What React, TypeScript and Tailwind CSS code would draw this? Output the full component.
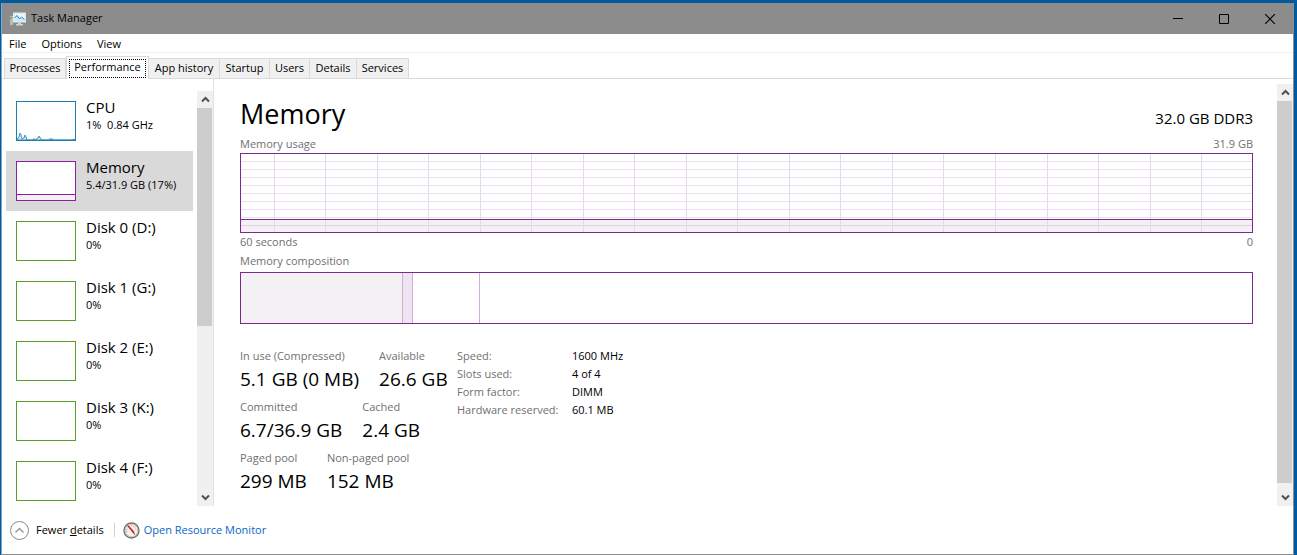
import React, { useState } from 'react';

const menus = ['File', 'Options', 'View'];

const tabs = [
  { name: 'Processes', width: 'w-[62px]' },
  { name: 'Performance', width: 'w-[83px]' },
  { name: 'App history', width: 'w-[71px]' },
  { name: 'Startup', width: 'w-[50px]' },
  { name: 'Users', width: 'w-[40px]' },
  { name: 'Details', width: 'w-[47px]' },
  { name: 'Services', width: 'w-[52px]' },
];

const devices = [
  { name: 'CPU', detail: '1%  0.84 GHz', border: 'border-[#1e7fa8]' },
  { name: 'Memory', detail: '5.4/31.9 GB (17%)', border: 'border-[#8b1fa0]' },
  { name: 'Disk 0 (D:)', detail: '0%', border: 'border-[#5a9e28]' },
  { name: 'Disk 1 (G:)', detail: '0%', border: 'border-[#5a9e28]' },
  { name: 'Disk 2 (E:)', detail: '0%', border: 'border-[#5a9e28]' },
  { name: 'Disk 3 (K:)', detail: '0%', border: 'border-[#5a9e28]' },
  { name: 'Disk 4 (F:)', detail: '0%', border: 'border-[#5a9e28]' },
];

const statRows = [
  [{ label: 'In use (Compressed)', value: '5.1 GB (0 MB)' }, { label: 'Available', value: '26.6 GB' }],
  [{ label: 'Committed', value: '6.7/36.9 GB' }, { label: 'Cached', value: '2.4 GB' }],
  [{ label: 'Paged pool', value: '299 MB' }, { label: 'Non-paged pool', value: '152 MB' }],
];

const hardware = [
  ['Speed:', '1600 MHz'],
  ['Slots used:', '4 of 4'],
  ['Form factor:', 'DIMM'],
  ['Hardware reserved:', '60.1 MB'],
];

const Chevron: React.FC<{ down?: boolean }> = ({ down }) => (
  <svg width="9" height="7" viewBox="0 0 9 7" className={down ? 'rotate-180' : ''}>
    <path d="M1 5.5 4.5 2 8 5.5" fill="none" stroke="#505050" strokeWidth="2" />
  </svg>
);

const ScrollBar: React.FC<{ thumb: string; label: string }> = ({ thumb, label }) => (
  <div className="flex w-4 shrink-0 flex-col bg-[#f0f0f0]">
    <button aria-label={`${label} up`} className="flex h-[17px] shrink-0 items-center justify-center">
      <Chevron />
    </button>
    <div className="min-h-0 flex-1">
      <div className={`mr-px bg-[#cdcdcd] ${thumb}`} />
    </div>
    <button aria-label={`${label} down`} className="flex h-[17px] shrink-0 items-center justify-center">
      <Chevron down />
    </button>
  </div>
);

const AppIcon = () => (
  <svg width="16" height="16" viewBox="0 0 16 16">
    <rect x="0" y="5" width="3" height="9" fill="#b9bcb4" />
    <rect x="0.5" y="6" width="1" height="2" fill="#4e9a3a" />
    <rect x="3" y="1.5" width="13" height="10" fill="#e4e8ea" />
    <rect x="4.5" y="3" width="10" height="7" fill="#eaf7fd" />
    <path d="M4.5 7 7 4.5 9.5 8 11.5 6 14.5 8.5V10h-10z" fill="#c9eafa" />
    <path d="M4.5 7 7 4.5 9.5 8 11.5 6 14.5 8.5" fill="none" stroke="#2187c4" strokeWidth="1" />
    <path d="M8 11.5h3V13h2v1.5H6V13h2z" fill="#d0d3d4" />
  </svg>
);

const GaugeIcon = () => (
  <svg width="17" height="17" viewBox="0 0 17 17">
    <circle cx="8.5" cy="8.5" r="7.5" fill="#f6f3f1" stroke="#77716d" strokeWidth="1.4" />
    <circle cx="8.5" cy="8.5" r="6.2" fill="none" stroke="#c9c2bd" strokeWidth="1" />
    <path d="M4 10A5 5 0 0 1 4.5 6M8 3.8A5 5 0 0 1 13 8.5" fill="none" stroke="#a09a96" strokeWidth="1" strokeDasharray="1 1" />
    <path d="M4 3.8 5.8 3.6 11.6 10 10.4 11.4z" fill="#d3221c" />
    <path d="M10 10.5 12 12.4" stroke="#8a1a16" strokeWidth="1" />
  </svg>
);

const Thumbnail: React.FC<{ name: string; border: string }> = ({ name, border }) => (
  <span className={`flex h-10 w-[60px] shrink-0 flex-col justify-end border bg-white ${border}`}>
    {name === 'CPU' && (
      <svg width="58" height="8" viewBox="0 0 58 8">
        <path
          d="M0 8 1 6 2 5 3 1 4 3 5 7 7 6 8 3 9 5 10 8H16L17 6.5 18 8 20 6.5 21 6 22 4 23 6 24 6.5 25 8H32L33 6.5 34 8 35 6.5 36 8H55L57 7 58 8z"
          fill="#d5e9f3"
          stroke="#3f93ba"
          strokeWidth="1"
        />
      </svg>
    )}
    {name === 'Memory' && <span className="h-[6px] border-t border-[#8b1fa0] bg-[#f5eff6]" />}
  </span>
);

const UsageChart = () => (
  <div className="h-20 border border-[#7a2a90] bg-white">
    <svg width="100%" height="78" className="block">
      <rect x="0" y="66" width="100%" height="12" fill="#f4f0f5" />
      {Array.from({ length: 9 }, (_, i) => (
        <rect key={i} x="0" y={7 + i * 8} width="100%" height="1" fill={i === 8 ? '#dcd4de' : '#e9e0ec'} />
      ))}
      {Array.from({ length: 19 }, (_, i) => (
        <line
          key={i}
          x1={`${3.3 + i * 5.095}%`}
          x2={`${3.3 + i * 5.095}%`}
          y1="0"
          y2="78"
          stroke="#e6d9ec"
          shapeRendering="crispEdges"
        />
      ))}
      <rect x="0" y="65" width="100%" height="1" fill="#7a2a90" />
    </svg>
  </div>
);

export default function App() {
  const [tab, setTab] = useState('Performance');
  const [device, setDevice] = useState('Memory');

  return (
    <div className="flex h-screen flex-col bg-[#005a9e] pt-[3px] pr-[3px] pl-px font-['Open_Sans','Noto_Sans',sans-serif] text-[11px] text-black">
      <div className="flex min-h-0 flex-1 flex-col border-r border-b border-l border-[#8c8c8c] border-l-[#7fa9c9] bg-white">
        <header className="flex h-[31px] shrink-0 items-center bg-[#8c8c8c] pl-2">
          <AppIcon />
          <h1 className="flex-1 pl-[5px]">Task Manager</h1>
          <button aria-label="Minimize" className="flex h-full w-[46px] items-center justify-center">
            <svg width="10" height="10" viewBox="0 0 10 10"><path d="M0 4.5h10" stroke="#000" /></svg>
          </button>
          <button aria-label="Maximize" className="flex h-full w-[46px] items-center justify-center">
            <svg width="10" height="10" viewBox="0 0 10 10"><path d="M.5.5h9v9h-9z" fill="none" stroke="#000" /></svg>
          </button>
          <button aria-label="Close" className="flex h-full w-[46px] items-center justify-center">
            <svg width="10" height="10" viewBox="0 0 10 10"><path d="M0 0 10 10M10 0 0 10" stroke="#000" strokeWidth="1.2" /></svg>
          </button>
        </header>

        <nav className="flex h-[19px] shrink-0 items-end gap-[15px] border-b border-[#f0f0f0] pl-[7px]">
          {menus.map(m => <button key={m} className="leading-4">{m}</button>)}
        </nav>

        <div role="tablist" className="flex h-[26px] shrink-0 items-end border-b border-[#d9d9d9] pl-[2px]">
          {tabs.map(t => t.name === tab ? (
            <button key={t.name} role="tab" aria-selected="true" className={`-mb-px h-[23px] shrink-0 border border-b-0 border-[#d9d9d9] bg-white p-[2px] pb-px whitespace-nowrap ${t.width}`}>
              <span className="flex h-[19px] items-center justify-center border border-dotted border-black pb-[2px]">{t.name}</span>
            </button>
          ) : (
            <button key={t.name} role="tab" aria-selected="false" onClick={() => setTab(t.name)} className={`h-5 shrink-0 border-t border-r border-[#d9d9d9] bg-[#f0f0f0] whitespace-nowrap first:border-l ${t.width}`}>
              {t.name}
            </button>
          ))}
        </div>

        <main className="flex min-h-0 flex-1">
          <aside className="flex w-[212px] shrink-0 border-r border-[#e2e2e2] pt-3 pl-1">
            <ul className="mr-1 flex-1 overflow-hidden">
              {devices.map(d => (
                <li key={d.name}>
                  <button
                    onClick={() => setDevice(d.name)}
                    className={`flex h-[60px] w-full items-start gap-[10px] pt-[10px] pl-[10px] text-left ${d.name === device ? 'bg-[#d9d9d9]' : ''}`}
                  >
                    <Thumbnail name={d.name} border={d.border} />
                    <span className="-mt-1 flex flex-col whitespace-pre">
                      <span className="text-[15px] leading-5">{d.name}</span>
                      <span className="leading-4">{d.detail}</span>
                    </span>
                  </button>
                </li>
              ))}
            </ul>
            <ScrollBar thumb="h-[218px]" label="Devices" />
          </aside>

          <section className="min-w-0 flex-1 overflow-hidden pt-3 pr-6 pl-[26px]">
            <div className="flex h-[45px] items-center justify-between">
              <h2 className="text-[27px] leading-9">Memory</h2>
              <p className="pt-2 text-[15px] leading-6">32.0 GB DDR3</p>
            </div>
            <div className="flex justify-between pb-px leading-4 text-[#707070]">
              <span>Memory usage</span>
              <span>31.9 GB</span>
            </div>
            <UsageChart />
            <div className="flex justify-between leading-[18px] text-[#707070]">
              <span>60 seconds</span>
              <span>0</span>
            </div>
            <p className="pt-px pb-[2px] leading-[18px] text-[#707070]">Memory composition</p>
            <div className="flex h-[52px] border border-[#7a2a90]">
              <div className="w-[16%] border-r border-[#cdb0d8] bg-[#f4f1f5]" />
              <div className="w-[1%] border-r border-[#cdb0d8] bg-[#efe4f2]" />
              <div className="w-[6.6%] border-r border-[#cdb0d8]" />
            </div>

            <div className="flex pt-[23px]">
              <div className="w-[217px] shrink-0">
                {statRows.map(row => (
                  <dl key={row[0].label} className="flex h-[51px] gap-5 whitespace-nowrap">
                    {row.map(s => (
                      <div key={s.label}>
                        <dt className="leading-[18px] text-[#707070]">{s.label}</dt>
                        <dd className="text-[19px] leading-7">{s.value}</dd>
                      </div>
                    ))}
                  </dl>
                ))}
              </div>
              <table className="h-[72px]">
                <tbody>
                  {hardware.map(([label, value]) => (
                    <tr key={label} className="leading-[18px]">
                      <th scope="row" className="w-[115px] text-left font-normal whitespace-nowrap text-[#707070]">{label}</th>
                      <td className="whitespace-nowrap">{value}</td>
                    </tr>
                  ))}
                </tbody>
              </table>
            </div>
          </section>

          <div className="flex pt-[5px]">
            <ScrollBar thumb="h-[382px]" label="Details" />
          </div>
        </main>

        <footer className="flex h-12 shrink-0 items-center pl-2">
          <button className="flex items-center gap-[7px]">
            <svg width="19" height="19" viewBox="0 0 19 19" fill="none">
              <circle cx="9.5" cy="9.5" r="9" stroke="#8a8a8a" />
              <path d="M5.5 11.5 9.5 7.5l4 4" stroke="#9a9a9a" strokeWidth="1.5" />
            </svg>
            <span>Fewer <u>d</u>etails</span>
          </button>
          <span className="mr-2 ml-[10px] h-[14px] w-px bg-[#d0d0d0]" />
          <a href="#" className="flex items-center gap-1 text-[#0a66c8]">
            <GaugeIcon />
            Open Resource Monitor
          </a>
        </footer>
      </div>
    </div>
  );
}
